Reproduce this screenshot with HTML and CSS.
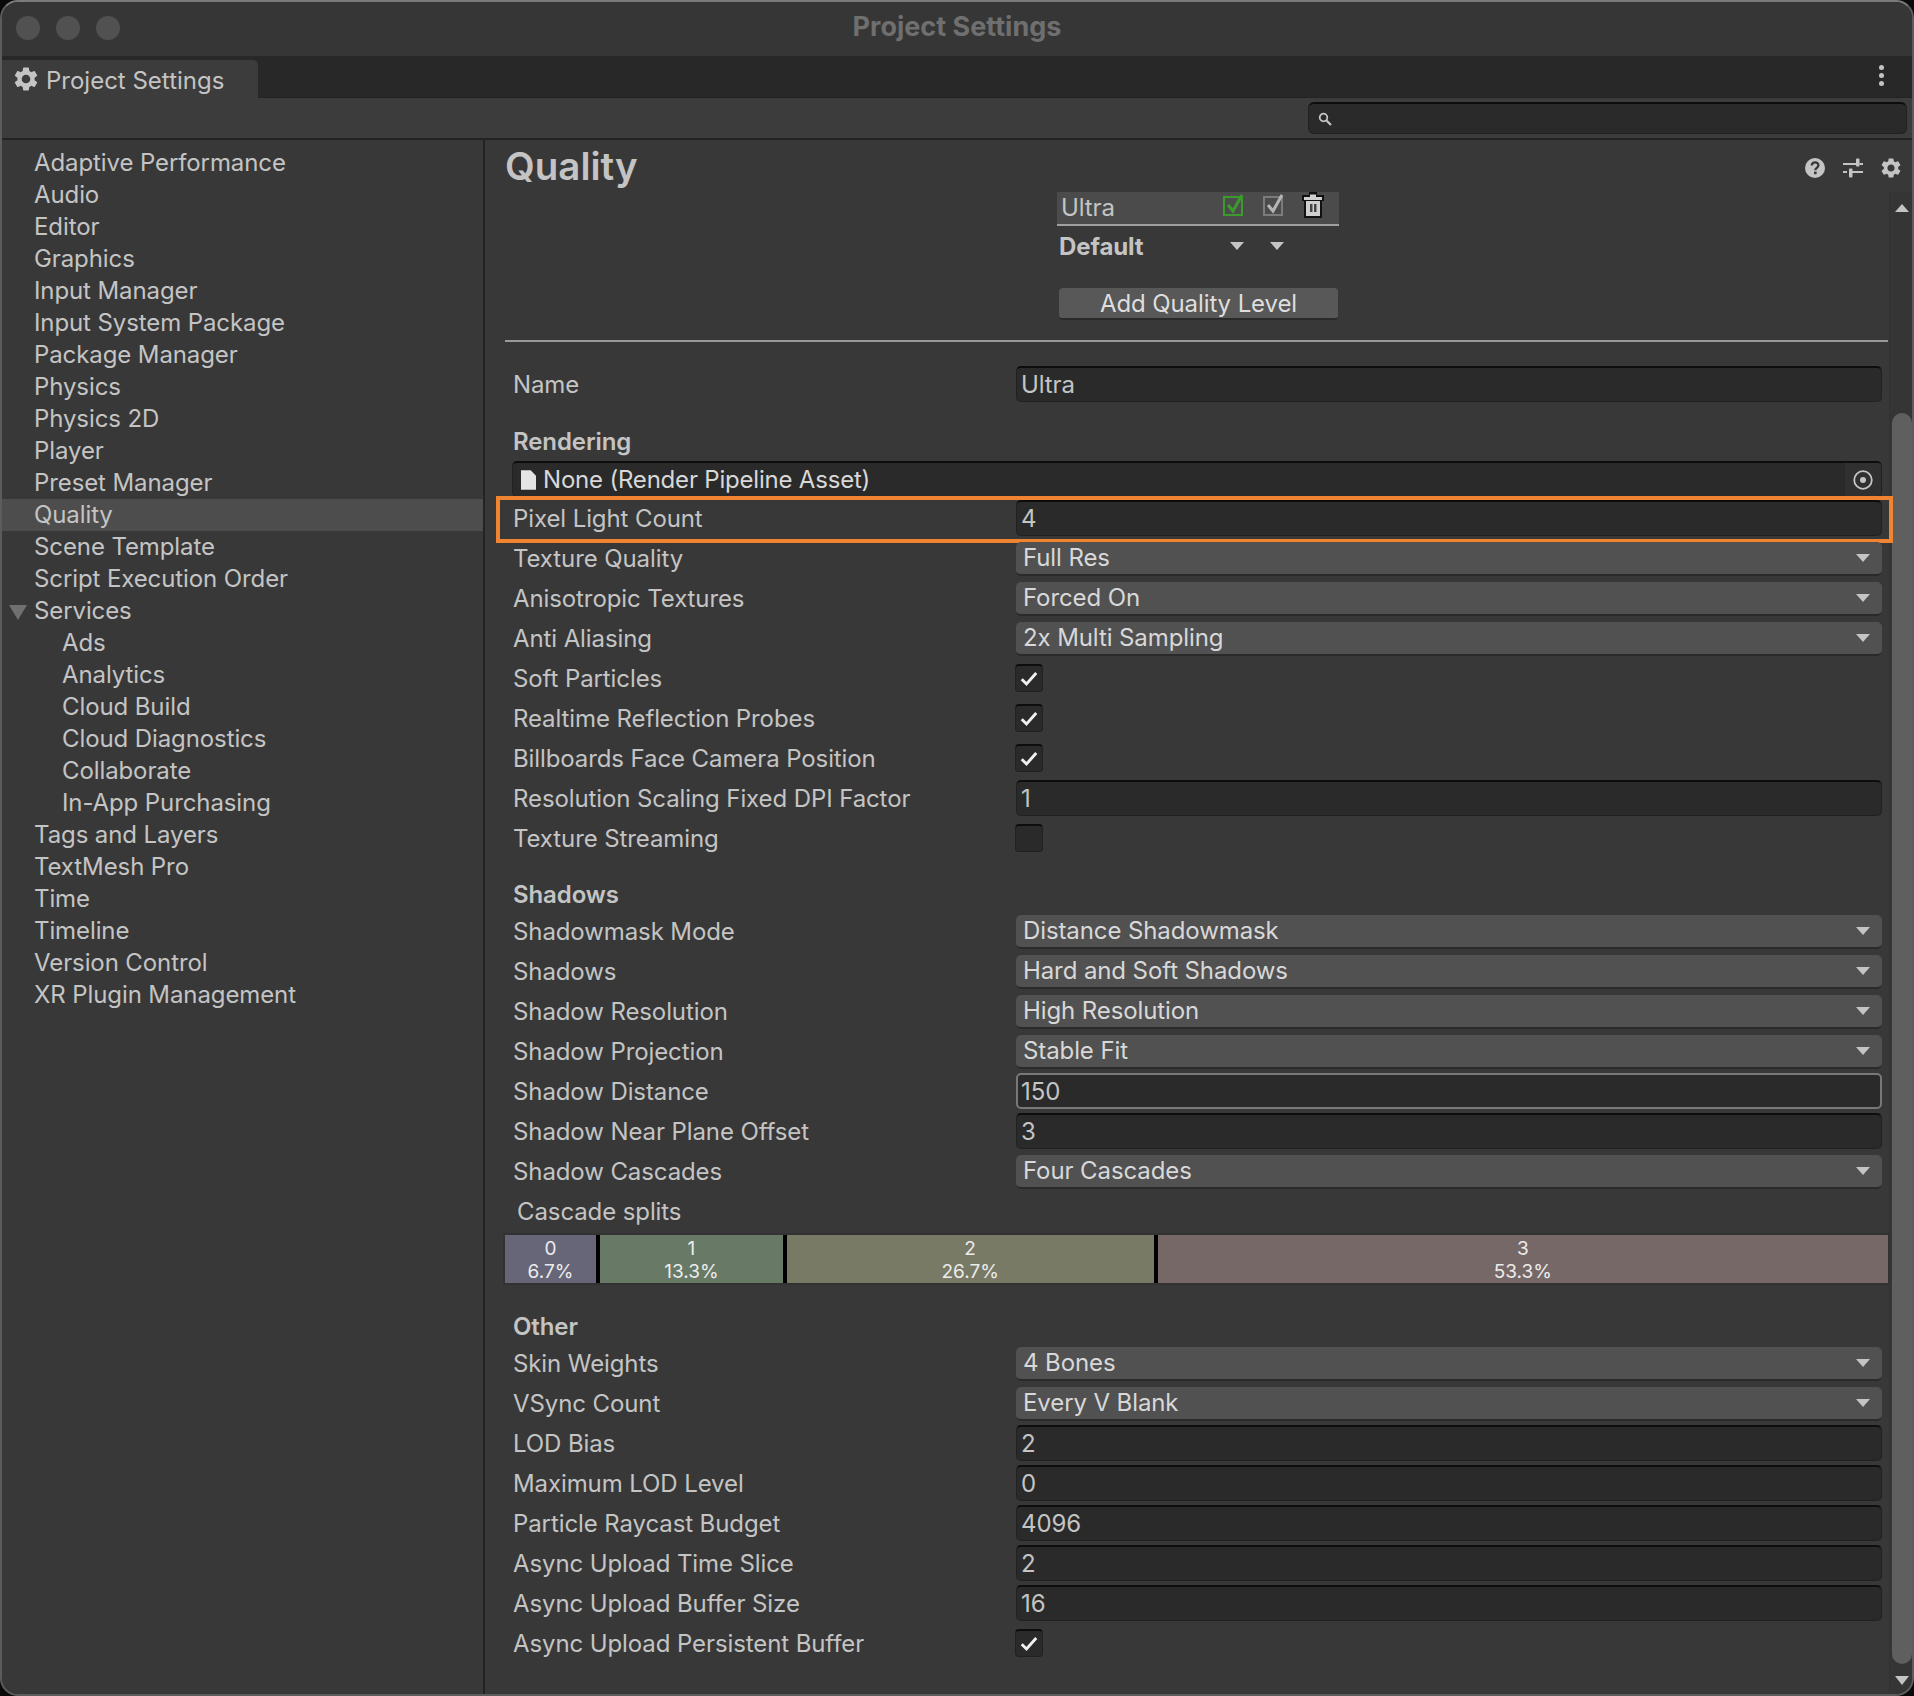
FILE: index.html
```html
<!DOCTYPE html>
<html lang="en">
<head>
<meta charset="utf-8">
<title>Project Settings</title>
<link rel="stylesheet" href="styles.css">
</head>
<body>
<svg class="defs" width="0" height="0" aria-hidden="true">
  <symbol id="gear" viewBox="2 2 20 20"><path fill-rule="evenodd" d="M19.14 12.94c.04-.3.06-.61.06-.94 0-.32-.02-.64-.07-.94l2.03-1.58a.49.49 0 0 0 .12-.61l-1.92-3.32a.488.488 0 0 0-.59-.22l-2.39.96c-.5-.38-1.03-.7-1.62-.94l-.36-2.54a.484.484 0 0 0-.48-.41h-3.84c-.24 0-.43.17-.47.41l-.36 2.54c-.59.24-1.13.57-1.62.94l-2.39-.96c-.22-.08-.47 0-.59.22L2.74 8.87c-.12.21-.08.47.12.61l2.03 1.58c-.05.3-.09.63-.09.94s.02.64.07.94l-2.03 1.58a.49.49 0 0 0-.12.61l1.92 3.32c.12.22.37.29.59.22l2.39-.96c.5.38 1.03.7 1.62.94l.36 2.54c.05.24.24.41.48.41h3.84c.24 0 .44-.17.47-.41l.36-2.54c.59-.24 1.13-.56 1.62-.94l2.39.96c.22.08.47 0 .59-.22l1.92-3.32c.12-.22.07-.47-.12-.61l-2.01-1.58zM12 15.6c-1.98 0-3.6-1.62-3.6-3.6s1.62-3.6 3.6-3.6 3.6 1.62 3.6 3.6-1.62 3.6-3.6 3.6z"/></symbol>
  <symbol id="tick" viewBox="0 0 16 16"><path d="M2.2 8.2 6 12l7.800-8.800" fill="none" stroke="currentColor" stroke-width="2.300"/></symbol>
</svg>
<div class="window">
  <header class="titlebar">
    <div class="lights"><span class="light"></span><span class="light"></span><span class="light"></span></div>
    <div class="window-title">Project Settings</div>
  </header>
  <div class="tabbar">
    <div class="tab"><svg class="tab-gear"><use href="#gear"/></svg><span class="tab-text">Project Settings</span></div>
    <div class="dots"><span></span><span></span><span></span></div>
  </div>
  <div class="toolbar">
    <div class="search">
      <svg class="search-icon" viewBox="0 0 14 14"><circle cx="5.500" cy="5.500" r="3.800" fill="none" stroke="currentColor" stroke-width="1.800"/><path d="M8.200 8.200 13 13" stroke="currentColor" stroke-width="2.200"/></svg>
    </div>
  </div>
  <div class="main">
    <nav class="sidebar">
      <div class="nav-item">Adaptive Performance</div>
      <div class="nav-item">Audio</div>
      <div class="nav-item">Editor</div>
      <div class="nav-item">Graphics</div>
      <div class="nav-item">Input Manager</div>
      <div class="nav-item">Input System Package</div>
      <div class="nav-item">Package Manager</div>
      <div class="nav-item">Physics</div>
      <div class="nav-item">Physics 2D</div>
      <div class="nav-item">Player</div>
      <div class="nav-item">Preset Manager</div>
      <div class="nav-item selected">Quality</div>
      <div class="nav-item">Scene Template</div>
      <div class="nav-item">Script Execution Order</div>
      <div class="nav-item expanded">Services</div>
      <div class="nav-item child">Ads</div>
      <div class="nav-item child">Analytics</div>
      <div class="nav-item child">Cloud Build</div>
      <div class="nav-item child">Cloud Diagnostics</div>
      <div class="nav-item child">Collaborate</div>
      <div class="nav-item child">In-App Purchasing</div>
      <div class="nav-item">Tags and Layers</div>
      <div class="nav-item">TextMesh Pro</div>
      <div class="nav-item">Time</div>
      <div class="nav-item">Timeline</div>
      <div class="nav-item">Version Control</div>
      <div class="nav-item">XR Plugin Management</div>
    </nav>
    <section class="content">
      <div class="content-head">
        <h1 class="page-title">Quality</h1>
        <div class="head-icons">
          <svg class="head-icon" viewBox="0 0 20 20"><circle cx="10" cy="10" r="10" fill="currentColor"/><path d="M6.800 7.600c0-4.200 6.600-4.200 6.600-.3 0 2.600-3.100 2.500-3.100 5" fill="none" stroke="#383838" stroke-width="2.300"/><rect x="9" y="13.600" width="2.600" height="2.600" fill="#383838"/></svg>
          <svg class="head-icon" viewBox="0 0 20 20"><path d="M0 6h13M16.500 6H20M0 14h4M9 14h11" stroke="currentColor" stroke-width="2" fill="none"/><rect x="13" y="0.500" width="3.500" height="8" rx="1" fill="currentColor"/><rect x="6" y="10.500" width="3.500" height="9" rx="1" fill="currentColor"/></svg>
          <svg class="head-icon"><use href="#gear"/></svg>
        </div>
      </div>
      <div class="scroll-area">
        <div class="settings">
          <div class="levels">
            <div class="level-row">
              <span class="level-name">Ultra</span>
              <svg class="level-check green" viewBox="0 0 22 24"><rect x="1" y="4" width="18" height="18" fill="none" stroke="currentColor" stroke-width="2"/><path d="M5 12l5 6 9-16" fill="none" stroke="currentColor" stroke-width="3"/></svg>
              <svg class="level-check grey" viewBox="0 0 22 24"><rect x="1" y="4" width="18" height="18" fill="none" stroke="currentColor" stroke-width="2"/><path d="M5 12l5 6 9-16" fill="none" stroke="#b4b4b4" stroke-width="3"/></svg>
              <svg class="level-trash" viewBox="0 0 24 26"><path d="M8 0h8v3h7v6h-2v17H3V9H1V3h7z" fill="#111"/><path d="M3 5h18v3H3zM9 2.500h6V5H9zM5 9h14v15H5z" fill="#cfcfcf"/><path d="M9 12h2.500v8H9zM13 12h2.500v8H13z" fill="#444"/></svg>
            </div>
            <div class="level-default">
              <span class="default-label">Default</span>
              <span class="arrow-down arrow-a"></span>
              <span class="arrow-down arrow-b"></span>
            </div>
            <button class="add-level">Add Quality Level</button>
          </div>
          <div class="divider"></div>

          <div class="row"><span class="label">Name</span><div class="field">Ultra</div></div>

          <div class="section section-rendering">Rendering</div>
          <div class="object-field">
            <svg class="file-icon" viewBox="0 0 14 18"><path d="M0 0h9l5 5v13H0z" fill="#e4e4e4"/></svg>
            <span class="object-text">None (Render Pipeline Asset)</span>
            <span class="picker"><svg class="target" viewBox="0 0 20 20"><circle cx="10" cy="10" r="8.800" fill="none" stroke="#c4c4c4" stroke-width="1.800"/><circle cx="10" cy="10" r="3" fill="#c4c4c4"/></svg></span>
          </div>
          <div class="row highlighted"><span class="label">Pixel Light Count</span><div class="field">4</div></div>
          <div class="row"><span class="label">Texture Quality</span><div class="dropdown">Full Res</div></div>
          <div class="row"><span class="label">Anisotropic Textures</span><div class="dropdown">Forced On</div></div>
          <div class="row"><span class="label">Anti Aliasing</span><div class="dropdown">2x Multi Sampling</div></div>
          <div class="row"><span class="label">Soft Particles</span><div class="check"><svg class="tick"><use href="#tick"/></svg></div></div>
          <div class="row"><span class="label">Realtime Reflection Probes</span><div class="check"><svg class="tick"><use href="#tick"/></svg></div></div>
          <div class="row"><span class="label">Billboards Face Camera Position</span><div class="check"><svg class="tick"><use href="#tick"/></svg></div></div>
          <div class="row"><span class="label">Resolution Scaling Fixed DPI Factor</span><div class="field">1</div></div>
          <div class="row"><span class="label">Texture Streaming</span><div class="check"></div></div>

          <div class="section section-shadows">Shadows</div>
          <div class="row"><span class="label">Shadowmask Mode</span><div class="dropdown">Distance Shadowmask</div></div>
          <div class="row"><span class="label">Shadows</span><div class="dropdown">Hard and Soft Shadows</div></div>
          <div class="row"><span class="label">Shadow Resolution</span><div class="dropdown">High Resolution</div></div>
          <div class="row"><span class="label">Shadow Projection</span><div class="dropdown">Stable Fit</div></div>
          <div class="row"><span class="label">Shadow Distance</span><div class="field focused">150</div></div>
          <div class="row"><span class="label">Shadow Near Plane Offset</span><div class="field">3</div></div>
          <div class="row"><span class="label">Shadow Cascades</span><div class="dropdown">Four Cascades</div></div>
          <div class="row"><span class="label label-cascade">Cascade splits</span></div>
          <div class="cascades">
            <div class="cascade c0">0<br>6.7%</div>
            <div class="cascade c1">1<br>13.3%</div>
            <div class="cascade c2">2<br>26.7%</div>
            <div class="cascade c3">3<br>53.3%</div>
          </div>

          <div class="section section-other">Other</div>
          <div class="row"><span class="label">Skin Weights</span><div class="dropdown">4 Bones</div></div>
          <div class="row"><span class="label">VSync Count</span><div class="dropdown">Every V Blank</div></div>
          <div class="row"><span class="label">LOD Bias</span><div class="field">2</div></div>
          <div class="row"><span class="label">Maximum LOD Level</span><div class="field">0</div></div>
          <div class="row"><span class="label">Particle Raycast Budget</span><div class="field">4096</div></div>
          <div class="row"><span class="label">Async Upload Time Slice</span><div class="field">2</div></div>
          <div class="row"><span class="label">Async Upload Buffer Size</span><div class="field">16</div></div>
          <div class="row"><span class="label">Async Upload Persistent Buffer</span><div class="check"><svg class="tick"><use href="#tick"/></svg></div></div>
        </div>
        <aside class="scrollbar">
          <div class="sb-end"><span class="sb-up"></span></div>
          <div class="sb-thumb"></div>
          <div class="sb-end"><span class="sb-down"></span></div>
        </aside>
      </div>
    </section>
  </div>
</div>
</body>
</html>
```
FILE: styles.css
```css
* { box-sizing: border-box; }
html, body { margin: 0; padding: 0; }
body {
  width: 1914px;
  height: 1696px;
  overflow: hidden;
  background: #0a0a0a;
  font-family: Inter, "Liberation Sans", sans-serif;
  font-size: 24px;
  letter-spacing: -0.1px;
  color: #c4c4c4;
}
.defs { position: absolute; }
.window {
  width: 1914px;
  height: 1696px;
  display: flex;
  flex-direction: column;
  background: #383838;
  border: 2px solid #5c5c5c;
  border-top-color: #7a7a7a;
  border-radius: 18px;
  overflow: hidden;
}
.titlebar {
  height: 54px;
  flex: none;
  background: #363636;
  display: flex;
  align-items: center;
  position: relative;
}
.lights { display: flex; gap: 16px; padding-left: 14px; margin-top: -2px; }
.light { width: 24px; height: 24px; border-radius: 50%; background: #515151; }
.window-title {
  position: absolute;
  left: 0;
  right: 0;
  top: 10px;
  text-align: center;
  font-weight: 700;
  color: #6f6f6f;
  line-height: 30px;
  font-size: 27px;
  letter-spacing: 0;
}
.tabbar {
  height: 42px;
  flex: none;
  background: #282828;
  border-bottom: 1px solid #232323;
  display: flex;
  align-items: flex-end;
  justify-content: space-between;
}
.tab {
  width: 256px;
  height: 38px;
  background: #3c3c3c;
  border-radius: 0 5px 0 0;
  display: flex;
  align-items: center;
  padding: 0 0 0 12px;
  gap: 8px;
  margin-bottom: -1px;
}
.tab-text { margin-top: 2px; letter-spacing: 0; }
.tab-gear { width: 24px; height: 24px; fill: #c4c4c4; flex: none; }
.dots { display: flex; flex-direction: column; gap: 3px; padding: 0 28px 11px 0; }
.dots span { width: 5px; height: 5px; border-radius: 50%; background: #c4c4c4; }
.toolbar {
  height: 42px;
  flex: none;
  background: #3c3c3c;
  border-bottom: 2px solid #232323;
  display: flex;
  justify-content: flex-end;
  padding: 4px 5px 0 0;
}
.search {
  width: 599px;
  height: 32px;
  background: #2a2a2a;
  border: 1px solid #212121;
  border-top: 2px solid #0d0d0d;
  border-radius: 6px;
  display: flex;
  align-items: center;
  padding-left: 9px;
}
.search-icon { width: 14px; height: 14px; color: #c4c4c4; }
.main { flex: 1; display: flex; min-height: 0; }
.sidebar {
  width: 483px;
  flex: none;
  border-right: 2px solid #232323;
  padding-top: 7px;
  background: #383838;
}
.nav-item {
  height: 32px;
  line-height: 32px;
  padding-left: 32px;
  white-space: nowrap;
  position: relative;
}
.nav-item.child { padding-left: 60px; }
.nav-item.selected { background: #4d4d4d; }
.nav-item.expanded::before {
  content: "";
  position: absolute;
  left: 7px;
  top: 10px;
  border-left: 9px solid transparent;
  border-right: 9px solid transparent;
  border-top: 15px solid #707070;
}
.content { flex: 1; min-width: 0; display: flex; flex-direction: column; }
.content-head {
  height: 52px;
  flex: none;
  display: flex;
  justify-content: space-between;
  align-items: center;
  padding: 0 11px 0 20px;
}
.page-title {
  margin: 0;
  font-size: 38.500px;
  line-height: 52px;
  font-weight: 600;
  letter-spacing: 0;
  color: #c4c4c4;
}
.head-icons { display: flex; gap: 18px; align-items: center; margin-top: 3px; }
.head-icon { width: 20px; height: 20px; fill: #c4c4c4; color: #c4c4c4; }
.scroll-area { flex: 1; display: flex; min-height: 0; }
.settings { flex: 1; min-width: 0; padding-left: 20px; }
.levels {
  width: 282px;
  margin-left: 552px;
  display: flex;
  flex-direction: column;
  align-items: flex-start;
}
.level-row {
  width: 282px;
  height: 34px;
  background: #4b4b4b;
  border-bottom: 2px solid #a0a0a0;
  position: relative;
  padding-left: 4px;
  line-height: 31px;
}
.level-check { position: absolute; top: 1px; width: 22px; height: 24px; }
.green { left: 166px; color: #3c9a2c; }
.grey { left: 206px; color: #7c7c7c; }
.level-trash { position: absolute; left: 244px; top: 0; width: 24px; height: 26px; }
.level-default { width: 282px; height: 42px; position: relative; line-height: 42px; padding-left: 2px; }
.default-label { font-weight: 700; color: #c4c4c4; }
.arrow-down {
  position: absolute;
  top: 16px;
  border-left: 7px solid transparent;
  border-right: 7px solid transparent;
  border-top: 8px solid #c4c4c4;
}
.arrow-a { left: 173px; }
.arrow-b { left: 213px; }
.add-level {
  width: 279px;
  height: 32px;
  margin: 20px 0 0 2px;
  padding: 0;
  background: #585858;
  color: #dedede;
  border: none;
  border-bottom: 2px solid #2a2a2a;
  border-radius: 4px;
  font: inherit;
  letter-spacing: inherit;
  line-height: 32px;
}
.divider { height: 2px; margin: 20px 1px 23px 0; background: #9a9a9a; }
.row {
  height: 40px;
  display: flex;
  align-items: center;
  padding: 0 7px 0 8px;
  position: relative;
}
.label { width: 503px; flex: none; white-space: nowrap; margin-bottom: 2px; }
.label-cascade { padding-left: 4px; }
.section {
  height: 34px;
  margin-top: 21px;
  padding-left: 8px;
  line-height: 34px;
  font-weight: 600;
}
.section-rendering { margin-top: 20px; }
.section-shadows { margin-top: 19px; }
.section-other { margin-top: 27px; }
.field {
  flex: 1;
  height: 36px;
  margin-bottom: 2px;
  background: #2a2a2a;
  border: 1px solid #212121;
  border-top: 2px solid #0d0d0d;
  border-radius: 5px;
  padding-left: 4px;
  line-height: 33px;
}
.field.focused { border: 2px solid #787878; padding-left: 3px; line-height: 33px; }
.dropdown {
  flex: 1;
  height: 34px;
  background: #515151;
  border-bottom: 2px solid #2a2a2a;
  border-radius: 5px;
  padding-left: 7px;
  line-height: 32px;
  color: #d8d8d8;
  position: relative;
}
.dropdown::after {
  content: "";
  position: absolute;
  right: 12px;
  top: 12px;
  border-left: 7px solid transparent;
  border-right: 7px solid transparent;
  border-top: 8px solid #c4c4c4;
}
.check {
  width: 28px;
  height: 28px;
  margin: 0 0 2px -1px;
  background: #2a2a2a;
  border: 1px solid #212121;
  border-top: 2px solid #0d0d0d;
  border-radius: 4px;
  display: flex;
  align-items: center;
  justify-content: center;
}
.tick { width: 20px; height: 20px; color: #f0f0f0; }
.highlighted::after {
  content: "";
  position: absolute;
  left: -9px;
  right: -4px;
  top: -3px;
  bottom: -4px;
  border: 4px solid #f08430;
  pointer-events: none;
}
.object-field {
  height: 36px;
  margin: 2px 7px 2px 7px;
  background: #2a2a2a;
  border: 1px solid #212121;
  border-top: 2px solid #0d0d0d;
  border-radius: 5px;
  display: flex;
  align-items: center;
  padding-left: 8px;
  gap: 7px;
  overflow: hidden;
}
.file-icon { width: 15px; height: 20px; flex: none; }
.object-text { flex: 1; color: #d8d8d8; letter-spacing: -0.2px; }
.picker {
  width: 36px;
  height: 34px;
  background: #303030;
  display: flex;
  align-items: center;
  justify-content: center;
}
.target { width: 20px; height: 20px; }
.cascades {
  display: flex;
  height: 48px;
  margin: 3px 1px 0 0;
  background: #000;
  gap: 4px;
  box-shadow: 0 0 0 2px #323232;
}
.cascade {
  text-align: center;
  font-size: 19px;
  line-height: 23px;
  letter-spacing: 0;
  color: #ececec;
  padding-top: 2px;
}
.c0 { flex: 91; background: #666678; }
.c1 { flex: 183; background: #687a66; }
.c2 { flex: 367; background: #787a66; }
.c3 { flex: 731; background: #776868; }
.scrollbar {
  width: 23px;
  flex: none;
  background: #353535;
  border-left: 1px solid #323232;
  padding-left: 2px;
  display: flex;
  flex-direction: column;
}
.sb-end { height: 32px; flex: none; display: flex; align-items: center; justify-content: center; }
.sb-up {
  border-left: 7px solid transparent;
  border-right: 7px solid transparent;
  border-bottom: 8px solid #c4c4c4;
}
.sb-down {
  border-left: 7px solid transparent;
  border-right: 7px solid transparent;
  border-top: 9px solid #c4c4c4;
}
.sb-thumb {
  height: 1251px;
  margin-top: 189px;
  background: #5f5f5f;
  border-radius: 10px;
  flex: none;
}
```
